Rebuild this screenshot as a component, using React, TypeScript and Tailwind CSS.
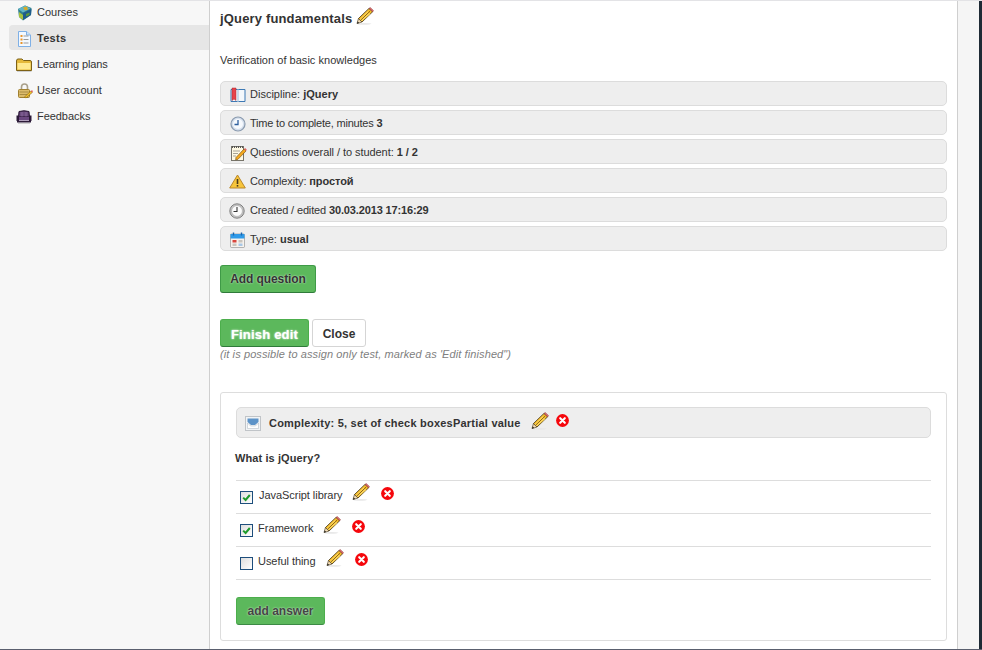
import React from "react";

function Pencil({ className = "" }: { className?: string }) {
  return (
    <svg viewBox="0 0 18 18" width="18" height="18" className={`shrink-0 ${className}`}>
      <ellipse cx="8" cy="16.8" rx="7.5" ry="0.9" fill="#e8e8e8" />
      <path d="M13 1.4 L16.6 4.8 L6 15 L2.4 11.6 Z" fill="#f6bd2a" stroke="#3d2f12" strokeWidth="0.8" />
      <path d="M11.6 4.2 L14.4 6.9 L5.4 14.5 L3.8 12.2 Z" fill="#fbd45a" />
      <path d="M4.6 13.2 L14 4.2" stroke="#8f6208" strokeWidth="1" />
      <path d="M2.4 11.6 L6 15 L1 16.6 Z" fill="#f4dcb4" stroke="#3d2f12" strokeWidth="0.6" />
      <path d="M1 16.6 L1.7 14.4 L3.2 15.9 Z" fill="#1c1c1c" />
      <path d="M14.2 0.5 L17.6 3.7 L16.6 4.8 L13 1.4 Z" fill="#e56f6f" stroke="#7d2b2b" strokeWidth="0.5" />
    </svg>
  );
}

function Del({ className = "" }: { className?: string }) {
  return (
    <svg viewBox="0 0 13 13" width="13" height="13" className={`shrink-0 ${className}`}>
      <circle cx="6.5" cy="6.5" r="6.4" fill="#f5070c" />
      <path d="M4.2 4.2 L8.8 8.8 M8.8 4.2 L4.2 8.8" stroke="#fff" strokeWidth="2.1" strokeLinecap="round" />
    </svg>
  );
}

function Box({ checked }: { checked: boolean }) {
  return (
    <span className="flex h-[13px] w-[13px] shrink-0 items-center justify-center border border-[#1d4e7c] bg-gradient-to-br from-[#dedede] to-[#ffffff]">
      {checked && (
        <svg viewBox="0 0 11 11" width="11" height="11">
          <path d="M2.2 5.6 L4.6 8 L8.8 3" fill="none" stroke="#1e9a2b" strokeWidth="2" />
        </svg>
      )}
    </span>
  );
}

function IconCourses() {
  return (
    <svg viewBox="0 0 15 16" width="15" height="16">
      <path d="M1 4 L8 0.5 L14.5 3 L14 10 L6 15.5 L2 12 Z" fill="#2f7f8e" />
      <path d="M1 4 L8 0.5 L13.5 3.5 L6 7.5 Z" fill="#5fb4c6" />
      <path d="M6 2.5 L10 1.5 L11 4.5 L8 5.5 Z" fill="#d8a928" />
      <path d="M2 7 L6 10 L6 15 L2 12 Z" fill="#a4c240" />
      <path d="M6 8 L14.5 4 L14 10 L6 15 Z" fill="#1f5d8c" />
      <path d="M9 9 L12.5 7.5 L12.5 10 L9 11.5 Z" fill="#5c9a3a" />
    </svg>
  );
}
function IconTests() {
  return (
    <svg viewBox="0 0 13 16" width="13" height="16">
      <path d="M0.5 0.5 H8.5 L12.5 4 V15.5 H0.5 Z" fill="#f2f8ff" stroke="#7fb0e6" />
      <path d="M8.5 0.5 V4 H12.5" fill="#cfe2f8" stroke="#7fb0e6" />
      <rect x="2.5" y="4" width="2" height="2" fill="#e8932b" />
      <rect x="2.5" y="7.5" width="2" height="2" fill="#e8932b" />
      <rect x="2.5" y="11" width="2" height="2" fill="#e8932b" />
      <path d="M5.5 5 H10.5 M5.5 8.5 H10.5 M5.5 12 H10.5" stroke="#9a9a9a" />
    </svg>
  );
}
function IconFolder() {
  return (
    <svg viewBox="0 0 16 14" width="16" height="14">
      <path d="M0.5 3 Q0.5 1 2 1 H6 L7.5 2.5 H14 Q15.5 2.5 15.5 4 V12.5 H0.5 Z" fill="#e5b93a" stroke="#7d6116" />
      <path d="M1.5 5 H14.5 V11.5 H1.5 Z" fill="#ffe98f" />
      <path d="M1 13.5 H15.5" stroke="#cfcfcf" />
    </svg>
  );
}
function IconLock() {
  return (
    <svg viewBox="0 0 16 16" width="16" height="16">
      <path d="M4.5 7 V4 Q4.5 1 7.5 1 Q10.5 1 10.5 4 V7" fill="none" stroke="#a9a08a" strokeWidth="1.6" />
      <rect x="1.5" y="6.5" width="11" height="8" rx="1" fill="#dcbc6c" stroke="#a0802f" />
      <path d="M2.5 9 H11.5 M2.5 11.5 H11.5" stroke="#a98c44" />
      <path d="M7.5 14 L13.8 8 L15.3 9.5 L9 15 Z" fill="#f4c22b" stroke="#6b4f10" strokeWidth="0.5" />
      <path d="M13.8 8 L15.3 9.5 L15.8 8 L15 7.3 Z" fill="#e04848" />
    </svg>
  );
}
function IconSofa() {
  return (
    <svg viewBox="0 0 16 14" width="16" height="14">
      <path d="M3 1.5 Q8 0 13 1.5 L13.5 7 H2.5 Z" fill="#5a3a6c" stroke="#2a1736" />
      <path d="M4 3 H12 M4 5 H12 M6 2 V6.5 M10 2 V6.5" stroke="#9474a6" strokeWidth="0.7" />
      <rect x="3" y="7" width="10" height="3.5" fill="#6b4880" />
      <path d="M0.5 5.5 H3 V11 H0.5 Z M13 5.5 H15.5 V11 H13 Z" fill="#2c1a38" />
      <path d="M1 11 H15 V12.5 H1 Z" fill="#2c1a38" />
      <path d="M2 13.5 H14" stroke="#cfcfcf" />
    </svg>
  );
}
function IconBook() {
  return (
    <svg viewBox="0 0 16 16" width="16" height="16">
      <path d="M1 2.5 H7.5 L8 3 L8.5 2.5 H15 V14.5 H8.5 L8 15 L7.5 14.5 H1 Z" fill="#f4f8fc" stroke="#3d79b4" />
      <path d="M2 1 H6 V13.5 L4 12 L2 13.5 Z" fill="#e8434a" stroke="#a92a30" strokeWidth="0.5" />
      <path d="M8 3 V15" stroke="#9dbcd8" />
    </svg>
  );
}
function IconTime() {
  return (
    <svg viewBox="0 0 16 16" width="16" height="16">
      <circle cx="8" cy="8" r="7" fill="#d5dfec" stroke="#8a9aae" strokeWidth="1.2" />
      <circle cx="8" cy="8" r="5" fill="#f6f9fd" />
      <path d="M8 4 V8.5 H4.5" fill="none" stroke="#2e5f9e" strokeWidth="1.3" />
    </svg>
  );
}
function IconNotes() {
  return (
    <svg viewBox="0 0 16 16" width="16" height="16">
      <rect x="0.5" y="1.5" width="12" height="14" fill="#fdf8e3" stroke="#77746a" />
      <path d="M1.5 1 V3 M3.5 1 V3 M5.5 1 V3 M7.5 1 V3 M9.5 1 V3 M11.5 1 V3" stroke="#555" />
      <path d="M2 6 H9 M2 8.5 H7 M2 11 H5" stroke="#a7a397" />
      <path d="M5 12.5 L13 4 L15 6 L7 14.3 L4.6 14.8 Z" fill="#f4a81e" stroke="#6e4708" strokeWidth="0.6" />
      <path d="M13 4 L15 6 L15.8 4.8 L14.2 3 Z" fill="#e06060" />
    </svg>
  );
}
function IconWarn() {
  return (
    <svg viewBox="0 0 17 15" width="17" height="15">
      <path d="M8.5 1 L16.3 14 H0.7 Z" fill="#f7c53b" stroke="#b9862a" strokeLinejoin="round" />
      <path d="M8.5 5 V10" stroke="#4a3a1c" strokeWidth="1.6" />
      <path d="M8.5 11 V12.6" stroke="#4a3a1c" strokeWidth="1.6" />
    </svg>
  );
}
function IconClock() {
  return (
    <svg viewBox="0 0 16 16" width="16" height="16">
      <circle cx="8" cy="8" r="7.2" fill="#c4c4c4" stroke="#808080" />
      <circle cx="8" cy="8" r="5.4" fill="#fbfbfb" stroke="#9a9a9a" strokeWidth="0.5" />
      <path d="M8 4 V8.5 H4.5" fill="none" stroke="#333" strokeWidth="1.1" />
    </svg>
  );
}
function IconCalendar() {
  return (
    <svg viewBox="0 0 15 16" width="15" height="16">
      <rect x="0.5" y="2" width="14" height="13.5" rx="1" fill="#f6f3ee" stroke="#888" strokeWidth="0.6" />
      <rect x="0.5" y="2" width="14" height="4.5" fill="#2f9ae8" />
      <path d="M3.5 0.5 V3.5 M11.5 0.5 V3.5" stroke="#1d66ad" strokeWidth="1.4" />
      <rect x="2.5" y="8" width="4" height="2.5" fill="#d9463c" />
      <rect x="8.5" y="8" width="4" height="2.5" fill="#c9c4bc" />
      <rect x="2.5" y="11.5" width="4" height="2.5" fill="#c9c4bc" />
      <rect x="8.5" y="11.5" width="4" height="2.5" fill="#a9c8e6" />
    </svg>
  );
}
function IconTray() {
  return (
    <svg viewBox="0 0 16 15" width="16" height="15">
      <rect x="0.5" y="0.5" width="15" height="14" fill="#f2f4f6" stroke="#c0c4c8" />
      <path d="M2.5 2.5 H13.5 V6 L10 9 H6 L2.5 6 Z" fill="#5d93c8" />
      <path d="M2.5 7 L5.5 10 H10.5 L13.5 7 V12.5 H2.5 Z" fill="#ffffff" stroke="#aab4be" strokeWidth="0.5" />
    </svg>
  );
}

const nav = [
  { label: "Courses", icon: <IconCourses />, x: "pl-[8px]", t: "" },
  { label: "Tests", icon: <IconTests />, active: true, x: "pl-[9px]", t: "tracking-[0.3px]" },
  { label: "Learning plans", icon: <IconFolder />, x: "pl-[7px]", t: "tracking-[-0.1px]" },
  { label: "User account", icon: <IconLock />, x: "pl-[8px]", t: "" },
  { label: "Feedbacks", icon: <IconSofa />, x: "pl-[7px]", t: "tracking-[-0.05px]" },
];

const info = [
  { icon: <IconBook />, text: "Discipline: ", bold: "jQuery", t: "", i: "" },
  { icon: <IconTime />, text: "Time to complete, minutes ", bold: "3", t: "tracking-[-0.2px]", i: "" },
  { icon: <IconNotes />, text: "Questions overall / to student: ", bold: "1 / 2", t: "tracking-[-0.06px]", i: "ml-[1px]" },
  { icon: <IconWarn />, text: "Complexity: ", bold: "простой", t: "tracking-[-0.1px]", i: "-ml-[1px]" },
  { icon: <IconClock />, text: "Created / edited ", bold: "30.03.2013 17:16:29", t: "tracking-[-0.14px]", i: "-ml-[1px]" },
  { icon: <IconCalendar />, text: "Type: ", bold: "usual", t: "", i: "" },
];

const answers = [
  { label: "JavaScript library", checked: true, t: "ml-[6px] tracking-[-0.05px]" },
  { label: "Framework", checked: true, t: "ml-[5px] tracking-[0.05px]" },
  { label: "Useful thing", checked: false, t: "ml-[5px] tracking-[-0.05px]" },
];

export default function App() {
  return (
    <div className="flex h-[650px] w-[982px] flex-col overflow-hidden bg-white font-['Liberation_Sans',Arial,sans-serif] text-[11px] text-[#333]">
      <div className="h-px shrink-0 bg-[#e3e3e6]" />
      <div className="flex min-h-0 flex-1">
        <aside className="w-[210px] shrink-0 border-r border-[#cfcfcf] bg-[#f7f7f7] pl-[9px]">
          <ul className="-mt-[2px] flex flex-col gap-px">
            {nav.map((n) => (
              <li
                key={n.label}
                className={`flex h-[25px] items-center rounded-l-[4px] pt-[2px] ${n.active ? "bg-[#e6e6e6] font-bold" : ""}`}
              >
                <span className={`flex w-[28px] shrink-0 items-center ${n.x}`}>{n.icon}</span>
                <span className={n.t}>{n.label}</span>
              </li>
            ))}
          </ul>
        </aside>

        <main className="flex w-[748px] shrink-0 flex-col border-r border-[#cfcfcf] pl-[10px] pr-[10px]">
          <div className="flex h-[33px] items-start">
            <h1 className="mt-[10px] text-[13px] font-bold leading-[15px] tracking-[0.16px]">jQuery fundamentals</h1>
            <Pencil className="ml-[4px] mt-[6px]" />
          </div>
          <p className="mt-[19px] leading-[14px] tracking-[0.03px]">Verification of basic knowledges</p>

          <div className="mt-[14px] flex flex-col gap-[4px]">
            {info.map((r) => (
              <div
                key={r.text}
                className="flex h-[25px] items-center rounded-[5px] border border-[#dcdcdc] bg-[#eeeeee] pl-[9px] pt-[2px]"
              >
                <span className="flex w-[20px] shrink-0 items-center">
                  <span className={`flex ${r.i}`}>{r.icon}</span>
                </span>
                <span className={r.t}>
                  {r.text}
                  <b>{r.bold}</b>
                </span>
              </div>
            ))}
          </div>

          <button className="mt-[14px] h-[28px] w-[96px] rounded-[3px] border border-[#3f9a47] border-b-[#2f7a3a] bg-[#5cb85c] text-[12px] font-bold tracking-[-0.1px] text-[#333] [text-shadow:0_0_2px_#ffffffcc]">
            Add question
          </button>

          <div className="mt-[26px] flex gap-[3px]">
            <button className="h-[28px] w-[89px] rounded-[3px] border border-[#4cae4c] border-b-[#2f7a3a] bg-[#5cb85c] pt-[4px] text-[13px] font-bold tracking-[0.2px] text-white [text-shadow:0_0_2px_#ffffff]">
              Finish edit
            </button>
            <button className="h-[28px] w-[54px] rounded-[3px] border border-[#d5d5d5] bg-white pt-[2px] text-[12px] font-bold text-[#333]">
              Close
            </button>
          </div>
          <p className="text-[11px] italic leading-[14px] tracking-[0.1px] text-[#808080]">
            (it is possible to assign only test, marked as 'Edit finished")
          </p>

          <section className="mt-[31px] flex h-[249px] flex-col rounded-[3px] border border-[#dddddd] px-[15px] pt-[14px]">
            <div className="flex h-[31px] items-center rounded-[5px] border border-[#dcdcdc] bg-[#eeeeee] pl-[8px] pt-[2px]">
              <IconTray />
              <b className="ml-[8px] text-[11px] tracking-[0.22px]">Complexity: 5, set of check boxesPartial value</b>
              <Pencil className="ml-[10px] -mt-[6px]" />
              <Del className="ml-[7px] -mt-[6px]" />
            </div>
            <p className="-ml-px mt-[13px] font-bold leading-[14px] tracking-[0.1px]">What is jQuery?</p>
            <div className="mt-[15px] border-t border-[#dddddd]">
              {answers.map((a) => (
                <div key={a.label} className="flex h-[33px] items-center border-b border-[#dddddd] pl-[4px]">
                  <Box checked={a.checked} />
                  <span className={`-mt-[4px] ${a.t}`}>{a.label}</span>
                  <Pencil className="ml-[10px] -mt-[10px]" />
                  <Del className="ml-[11px] -mt-[8px]" />
                </div>
              ))}
            </div>
            <button className="mt-[17px] h-[28px] w-[89px] rounded-[3px] border border-[#4cae4c] border-b-[#3c8a45] bg-[#5cb85c] text-[12px] font-bold text-[#444] [text-shadow:0_0_2px_#ffffffcc]">
              add answer
            </button>
          </section>
        </main>

        <div className="w-[21px] shrink-0 bg-[#f5f5f5]" />
        <div className="flex-1 bg-[#1e2a35]" />
      </div>
      <div className="h-px shrink-0 bg-[#5a5f6e]" />
    </div>
  );
}
